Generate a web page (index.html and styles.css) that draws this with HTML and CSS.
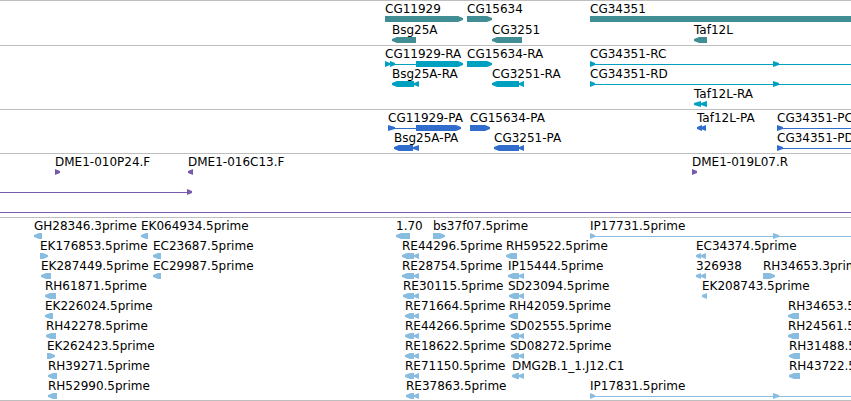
FILE: index.html
```html
<!DOCTYPE html>
<html lang="en">
<head>
    <meta charset="UTF-8">
    <title>Genome Browser</title>
    <link rel="stylesheet" href="styles.css">
</head>
<body>
    <main id="browser">
        <section class="track gene" id="gene"></section>
        <section class="track mrna" id="mrna"></section>
        <section class="track protein" id="protein"></section>
        <section class="track bac" id="bac"></section>
        <section class="track est" id="est"></section>
    </main>
    <script src="tracks.js"></script>
</body>
</html>
```
FILE: styles.css
```css
body {
    margin: 0;
    background: #fff;
    color: #000;
    font-family: 'DejaVu Sans', sans-serif;
    font-size: 12px;
    line-height: 14px;
}

#browser {
    overflow: hidden;
    border-bottom: 1px solid #bebebe;
}

.track {
    border-top: 1px solid #bebebe;
    padding: 1px 0 2px;
}

.gene {
    color: #408e93;
    padding-bottom: 1px;
}

.mrna {
    color: #00a0c1;
}

.protein {
    color: #306dcd;
}

.bac {
    color: #775aab;
}

.est {
    color: #89bddf;
    padding-bottom: 1px;
}

/* labels and glyphs of a row share one cell and are shifted along the sequence */
.row {
    display: grid;
    grid-template-columns: minmax(0, 1fr);
    grid-template-rows: 14px 6px;
}

.gene .row {
    grid-template-rows: 14px 7px;
}

.label {
    grid-area: 1 / 1;
    justify-self: start;
    color: #000;
    white-space: nowrap;
}

.part {
    grid-area: 2 / 1;
    height: 6px;
    background: currentColor;
}

.right {
    clip-path: polygon(0 0, calc(100% - 5px) 0, 100% 35%, 100% 65%, calc(100% - 5px) 100%, 0 100%);
}

.left {
    clip-path: polygon(5px 0, 100% 0, 100% 100%, 5px 100%, 0 65%, 0 35%);
}

.tip-right {
    clip-path: polygon(0 0, 100% 35%, 100% 65%, 0 100%);
}

.tip-left {
    clip-path: polygon(100% 0, 100% 100%, 0 65%, 0 35%);
}

.line {
    height: 1px;
    margin-top: 3px;
}
```
FILE: tracks.js
```js
const SPAN = 851;

const TYPES = { R: 'right', L: 'left', r: 'tip-right', l: 'tip-left', '-': 'line' };

const LONG = 'r590:595 -590:851 r773:779';

// each row is a list of [label, label start, glyph parts]
const tracks = {
    gene: [
        [['CG11929', 385, 'R385:463'], ['CG15634', 467, 'R467:492'], ['CG34351', 590, 'R590:860']],
        [['Bsg25A', 392, 'L392:416'], ['CG3251', 492, 'L492:522'], ['Taf12L', 694, 'L694:707']]
    ],
    mrna: [
        [['CG11929-RA', 385, 'r385:390 r390:395 -385:416 R416:463'], ['CG15634-RA', 467, 'R467:492'], ['CG34351-RC', 590, LONG]],
        [['Bsg25A-RA', 392, 'L392:414 l414:419'], ['CG3251-RA', 492, 'L492:519 l519:524'], ['CG34351-RD', 590, LONG]],
        [['Taf12L-RA', 694, 'l694:701 l701:707']]
    ],
    protein: [
        [['CG11929-PA', 388, 'r388:395 -388:416 R416:461'], ['CG15634-PA', 470, 'R470:490'], ['Taf12L-PA', 697, 'l697:702 l701:706'], ['CG34351-PC', 777, 'r777:783 -777:851']],
        [['Bsg25A-PA', 394, 'L394:413 l413:419'], ['CG3251-PA', 494, 'L494:519 l519:524'], ['CG34351-PD', 777, 'r777:783 -777:851']]
    ],
    bac: [
        [['DME1-010P24.F', 55, 'r55:60'], ['DME1-016C13.F', 188, 'l188:193'], ['DME1-019L07.R', 692, 'r692:697']],
        [['', 0, '-0:188 r187:192']],
        [['', 0, '-0:851']]
    ],
    est: [
        [['GH28346.3prime', 34, 'L34:42'], ['EK064934.5prime', 141, 'L141:148'], ['1.70', 396, 'L396:410'], ['bs37f07.5prime', 433, 'R433:445'], ['IP17731.5prime', 590, LONG]],
        [['EK176853.5prime', 40, 'R40:48'], ['EC23687.5prime', 153, 'L153:161'], ['RE44296.5prime', 402, 'L402:414 l414:419'], ['RH59522.5prime', 506, 'L506:517'], ['EC34374.5prime', 696, 'l696:701 l701:706']],
        [['EK287449.5prime', 41, 'L41:51'], ['EC29987.5prime', 153, 'L153:161'], ['RE28754.5prime', 402, 'L402:414 l414:419'], ['IP15444.5prime', 508, 'L508:519 l519:524'], ['326938', 696, 'l696:701 l701:706'], ['RH34653.3prime', 763, 'R763:775']],
        [['RH61871.5prime', 45, 'L45:56'], ['RE30115.5prime', 403, 'L403:414 l414:419'], ['SD23094.5prime', 508, 'L509:519 l519:524'], ['EK208743.5prime', 702, 'l702:707']],
        [['EK226024.5prime', 45, 'L45:53'], ['RE71664.5prime', 405, 'L405:414 l414:419'], ['RH42059.5prime', 509, 'L509:518'], ['RH34653.5prime', 788, 'L788:799']],
        [['RH42278.5prime', 46, 'L46:56'], ['RE44266.5prime', 405, 'L405:414 l414:419'], ['SD02555.5prime', 510, 'L511:519 l519:524'], ['RH24561.5prime', 788, 'L788:799']],
        [['EK262423.5prime', 47, 'R47:55'], ['RE18622.5prime', 405, 'L405:414 l414:419'], ['SD08272.5prime', 510, 'L511:519 l519:524'], ['RH31488.5prime', 789, 'L789:800']],
        [['RH39271.5prime', 48, 'L48:57'], ['RE71150.5prime', 405, 'L405:414 l414:419'], ['DMG2B.1_1.J12.C1', 512, 'L512:519 l519:524'], ['RH43722.5prime', 789, 'L789:800']],
        [['RH52990.5prime', 48, 'L48:57'], ['RE37863.5prime', 406, 'L406:414 l414:419'], ['IP17831.5prime', 590, LONG]]
    ]
};

const percent = n => (n / SPAN * 100) + '%';

function addItem(row, className, start) {
    const item = document.createElement('span');
    item.className = className;
    item.style.marginLeft = percent(start);
    row.appendChild(item);
    return item;
}

for (const id in tracks) {
    const track = document.getElementById(id);
    tracks[id].forEach(features => {
        const row = document.createElement('div');
        row.className = 'row';
        features.forEach(([name, labelStart, parts]) => {
            if (name) {
                addItem(row, 'label', labelStart).textContent = name;
            }
            parts.split(' ').forEach(part => {
                const [start, end] = part.slice(1).split(':').map(Number);
                addItem(row, 'part ' + TYPES[part[0]], start).style.width = percent(end - start);
            });
        });
        track.appendChild(row);
    });
}
```
